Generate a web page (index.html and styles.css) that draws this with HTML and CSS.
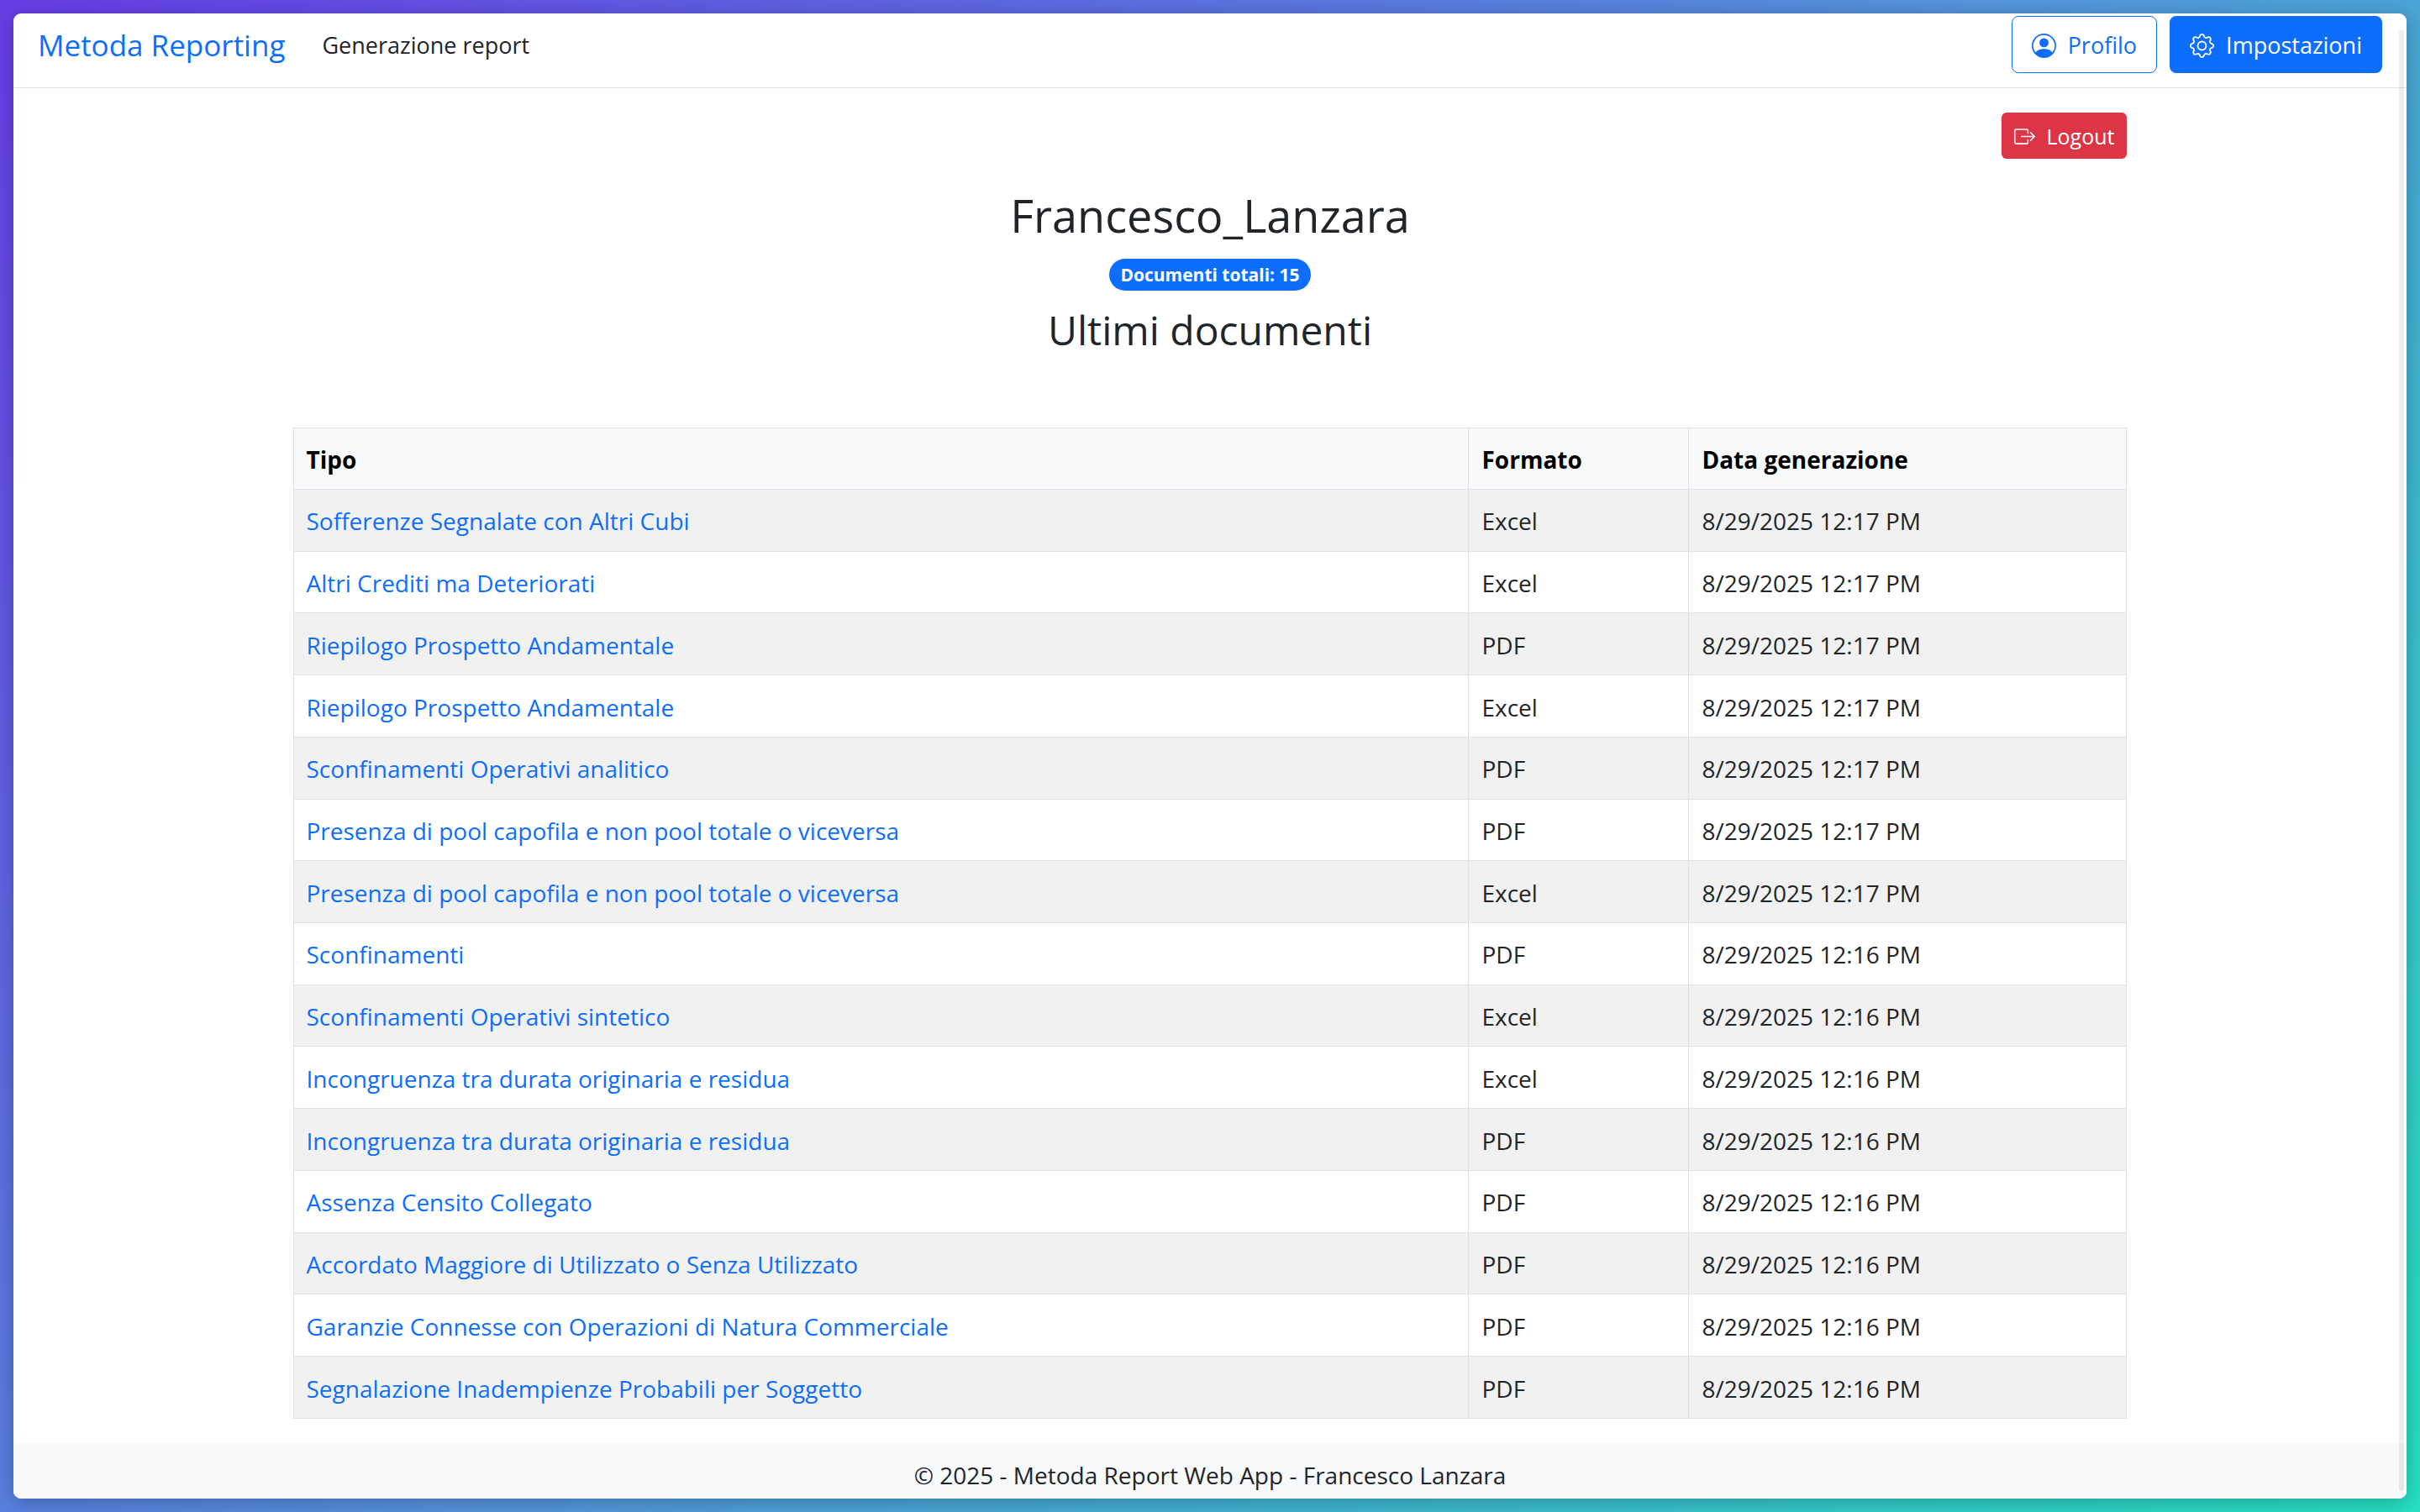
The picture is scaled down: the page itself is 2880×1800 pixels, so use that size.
FILE: index.html
```
<!DOCTYPE html>
<html lang="it">
<head>
<meta charset="utf-8">
<title>Metoda Reporting</title>
<link rel="stylesheet" href="styles.css">
</head>
<body>
<div class="shell">
  <header class="navbar">
    <a class="brand" href="#">Metoda Reporting</a>
    <nav class="nav"><a class="nav-link" href="#">Generazione report</a></nav>
    <div class="nav-actions">
      <button type="button" class="btn btn-outline">
        <svg class="icon" viewBox="0 0 16 16" aria-hidden="true"><path d="M11 6a3 3 0 1 1-6 0 3 3 0 0 1 6 0"/><path fill-rule="evenodd" d="M0 8a8 8 0 1 1 16 0A8 8 0 0 1 0 8m8-7a7 7 0 0 0-5.468 11.37C3.242 11.226 4.805 10 8 10s4.757 1.225 5.468 2.37A7 7 0 0 0 8 1"/></svg>
        Profilo
      </button>
      <button type="button" class="btn btn-primary">
        <svg class="icon" viewBox="0 0 16 16" aria-hidden="true"><path d="M8 4.754a3.246 3.246 0 1 0 0 6.492 3.246 3.246 0 0 0 0-6.492M5.754 8a2.246 2.246 0 1 1 4.492 0 2.246 2.246 0 0 1-4.492 0"/><path d="M9.796 1.343c-.527-1.79-3.065-1.79-3.592 0l-.094.319a.873.873 0 0 1-1.255.52l-.292-.16c-1.64-.892-3.433.902-2.54 2.541l.159.292a.873.873 0 0 1-.52 1.255l-.319.094c-1.79.527-1.79 3.065 0 3.592l.319.094a.873.873 0 0 1 .52 1.255l-.16.292c-.892 1.64.901 3.434 2.541 2.54l.292-.159a.873.873 0 0 1 1.255.52l.094.319c.527 1.79 3.065 1.79 3.592 0l.094-.319a.873.873 0 0 1 1.255-.52l.292.16c1.64.893 3.434-.902 2.54-2.541l-.159-.292a.873.873 0 0 1 .52-1.255l.319-.094c1.79-.527 1.79-3.065 0-3.592l-.319-.094a.873.873 0 0 1-.52-1.255l.16-.292c.893-1.64-.902-3.433-2.541-2.54l-.292.159a.873.873 0 0 1-1.255-.52zm-2.633.283c.246-.835 1.428-.835 1.674 0l.094.319a1.873 1.873 0 0 0 2.693 1.115l.291-.16c.764-.415 1.6.42 1.184 1.185l-.159.292a1.873 1.873 0 0 0 1.116 2.692l.318.094c.835.246.835 1.428 0 1.674l-.319.094a1.873 1.873 0 0 0-1.115 2.693l.16.291c.415.764-.42 1.6-1.185 1.184l-.291-.159a1.873 1.873 0 0 0-2.693 1.116l-.094.318c-.246.835-1.428.835-1.674 0l-.094-.319a1.873 1.873 0 0 0-2.692-1.115l-.292.16c-.764.415-1.6-.42-1.184-1.185l.159-.291A1.873 1.873 0 0 0 1.945 8.93l-.319-.094c-.835-.246-.835-1.428 0-1.674l.319-.094A1.873 1.873 0 0 0 3.06 4.377l-.16-.292c-.415-.764.42-1.6 1.185-1.184l.292.159a1.873 1.873 0 0 0 2.692-1.115z"/></svg>
        Impostazioni
      </button>
    </div>
  </header>

  <main class="content">
    <div class="toolbar">
      <button type="button" class="btn btn-danger btn-small">
        <svg class="icon" viewBox="0 0 16 16" aria-hidden="true"><path fill-rule="evenodd" d="M10 12.5a.5.5 0 0 1-.5.5h-8a.5.5 0 0 1-.5-.5v-9a.5.5 0 0 1 .5-.5h8a.5.5 0 0 1 .5.5v2a.5.5 0 0 0 1 0v-2A1.5 1.5 0 0 0 9.5 2h-8A1.5 1.5 0 0 0 0 3.5v9A1.5 1.5 0 0 0 1.5 14h8a1.5 1.5 0 0 0 1.5-1.5v-2a.5.5 0 0 0-1 0z"/><path fill-rule="evenodd" d="M15.854 8.354a.5.5 0 0 0 0-.708l-3-3a.5.5 0 0 0-.708.708L14.293 7.5H5.5a.5.5 0 0 0 0 1h8.793l-2.147 2.146a.5.5 0 0 0 .708.708z"/></svg>
        Logout
      </button>
    </div>
    <div class="summary">
      <h1 class="user-name">Francesco_Lanzara</h1>
      <span class="badge">Documenti totali: 15</span>
      <h2 class="section-title">Ultimi documenti</h2>
    </div>
    <table class="documents">
      <colgroup><col class="col-type"><col class="col-format"><col class="col-date"></colgroup>
      <thead>
        <tr><th scope="col">Tipo</th><th scope="col">Formato</th><th scope="col">Data generazione</th></tr>
      </thead>
      <tbody>
        <tr><td><a href="#">Sofferenze Segnalate con Altri Cubi</a></td><td>Excel</td><td>8/29/2025 12:17 PM</td></tr>
        <tr><td><a href="#">Altri Crediti ma Deteriorati</a></td><td>Excel</td><td>8/29/2025 12:17 PM</td></tr>
        <tr><td><a href="#">Riepilogo Prospetto Andamentale</a></td><td>PDF</td><td>8/29/2025 12:17 PM</td></tr>
        <tr><td><a href="#">Riepilogo Prospetto Andamentale</a></td><td>Excel</td><td>8/29/2025 12:17 PM</td></tr>
        <tr><td><a href="#">Sconfinamenti Operativi analitico</a></td><td>PDF</td><td>8/29/2025 12:17 PM</td></tr>
        <tr><td><a href="#">Presenza di pool capofila e non pool totale o viceversa</a></td><td>PDF</td><td>8/29/2025 12:17 PM</td></tr>
        <tr><td><a href="#">Presenza di pool capofila e non pool totale o viceversa</a></td><td>Excel</td><td>8/29/2025 12:17 PM</td></tr>
        <tr><td><a href="#">Sconfinamenti</a></td><td>PDF</td><td>8/29/2025 12:16 PM</td></tr>
        <tr><td><a href="#">Sconfinamenti Operativi sintetico</a></td><td>Excel</td><td>8/29/2025 12:16 PM</td></tr>
        <tr><td><a href="#">Incongruenza tra durata originaria e residua</a></td><td>Excel</td><td>8/29/2025 12:16 PM</td></tr>
        <tr><td><a href="#">Incongruenza tra durata originaria e residua</a></td><td>PDF</td><td>8/29/2025 12:16 PM</td></tr>
        <tr><td><a href="#">Assenza Censito Collegato</a></td><td>PDF</td><td>8/29/2025 12:16 PM</td></tr>
        <tr><td><a href="#">Accordato Maggiore di Utilizzato o Senza Utilizzato</a></td><td>PDF</td><td>8/29/2025 12:16 PM</td></tr>
        <tr><td><a href="#">Garanzie Connesse con Operazioni di Natura Commerciale</a></td><td>PDF</td><td>8/29/2025 12:16 PM</td></tr>
        <tr><td><a href="#">Segnalazione Inadempienze Probabili per Soggetto</a></td><td>PDF</td><td>8/29/2025 12:16 PM</td></tr>
      </tbody>
    </table>
  </main>

  <footer class="footer">© 2025 - Metoda Report Web App - Francesco Lanzara</footer>
  <div class="scroll-thumb"></div>
</div>
</body>
</html>
```
FILE: styles.css
```
:root {
  --primary: #0d6efd;
  --danger: #dc3545;
  --text: #212529;
  --border: #dee2e6;
  --light: #f8f9fb;
  --striped: #f1f1f1;
}

* { box-sizing: border-box; }

body {
  margin: 0;
  min-height: 100vh;
  padding: 16px;
  display: flex;
  font-family: "Segoe UI", "Open Sans", "Noto Sans", sans-serif;
  font-size: 28px;
  line-height: 40px;
  color: var(--text);
  background: linear-gradient(135deg, #673de6 0%, #5593dc 50%, #26e0c1 100%);
}

a { color: var(--primary); text-decoration: none; }

.shell {
  position: relative;
  flex: 1;
  display: flex;
  flex-direction: column;
  border-radius: 9px;
  background: #fff;
  box-shadow: 0 4px 24px rgba(0, 0, 0, 0.25);
}

/* Top bar */
.navbar {
  display: flex;
  align-items: center;
  gap: 44px;
  padding: 3px 29px 17px;
  border-bottom: 1px solid var(--border);
  font-size: 27px;
  line-height: 40px;
}

.brand { padding-top: 2px; font-size: 35px; }
.nav { flex: 1; padding-top: 2px; }
.nav-link { color: var(--text); }
.nav-actions { display: flex; gap: 15px; }

.btn {
  display: inline-flex;
  align-items: center;
  gap: 14px;
  padding: 14px 23px 12px;
  border: 1px solid transparent;
  border-radius: 8px;
  font: inherit;
  color: #fff;
  cursor: pointer;
}

.btn-outline { color: var(--primary); border-color: var(--primary); background: #fff; }
.btn-primary { background: var(--primary); }
.btn-danger { background: var(--danger); }

.icon { width: 29px; height: 29px; fill: currentColor; }

.btn-small { padding: 7px 14px 6px; border-radius: 6px; font-size: 25px; }
.btn-small .icon { width: 25px; height: 25px; }

/* Page content */
.content {
  flex: 1;
  width: 77%;
  margin: 0 auto;
  padding: 29px 5px;
}

.toolbar { display: flex; justify-content: flex-end; }

.summary {
  display: flex;
  flex-direction: column;
  align-items: center;
  gap: 17px;
  padding: 32px 0 86px;
}

.user-name, .section-title { margin: 0; font-weight: 400; }
.user-name { font-size: 54px; line-height: 70px; }
.section-title { font-size: 48px; line-height: 60px; }

.badge {
  padding: 4px 13px;
  border-radius: 19px;
  font-size: 21px;
  line-height: 30px;
  font-weight: 700;
  color: #fff;
  background: var(--primary);
}

.documents {
  width: 100%;
  height: 1180px;
  table-layout: fixed;
  border-collapse: collapse;
}

.col-format { width: 262px; }
.col-date { width: 521px; }

.documents th, .documents td {
  padding: 17px 15px 15px;
  border: 1px solid var(--border);
  text-align: left;
}

.documents th { font-weight: 700; color: #000; background: var(--light); }
.documents tbody tr:nth-child(odd) { background: var(--striped); }

.footer {
  padding: 18px 29px 8px;
  border-radius: 0 0 9px 9px;
  text-align: center;
  background: var(--light);
}

/* Overlay scroll indicator */
.scroll-thumb {
  position: absolute;
  top: 20px;
  right: 3px;
  bottom: 9px;
  width: 6px;
  border-radius: 3px;
  background: rgba(0, 0, 0, 0.07);
}
```
